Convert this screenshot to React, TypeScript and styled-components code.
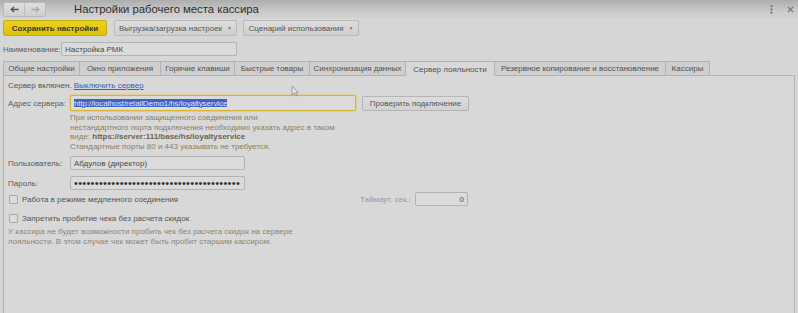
import styled, { createGlobalStyle } from "styled-components";

const GlobalStyle = createGlobalStyle`
  html, body {
    margin: 0;
    padding: 0;
    background: #d6d6d6;
  }
  body {
    font-family: "Liberation Sans", Arial, sans-serif;
    font-size: 8px;
    color: #444;
  }
`;

const Window = styled.div`
  width: 798px;
  height: 313px;
  overflow: hidden;
  display: flex;
  flex-direction: column;
  background: #d6d6d6;
`;

const TitleBar = styled.div`
  height: 18px;
  flex: none;
  display: flex;
  align-items: center;
  padding: 0 3px;
  background: linear-gradient(#adadad, #c9c9c9 60%, #d3d3d3);
`;

const NavGroup = styled.div`
  display: flex;
  height: 13px;
  border: 1px solid #b8b8b8;
  border-radius: 2px;
  background: linear-gradient(#dedede, #cfcfcf);
`;

const NavButton = styled.div<{ $disabled?: boolean }>`
  width: 20px;
  display: flex;
  align-items: center;
  justify-content: center;
  color: ${({ $disabled }) => ($disabled ? "#a8a8a8" : "#555")};
  & + & {
    border-left: 1px solid #bdbdbd;
  }
`;

const Title = styled.div`
  margin-left: 28px;
  font-size: 11.3px;
  color: #2e2e2e;
  flex: 1;
`;

const WinIcon = styled.div`
  width: 10px;
  display: flex;
  justify-content: center;
  color: #777;
  & + & {
    margin-left: 9px;
  }
`;

const Toolbar = styled.div`
  display: flex;
  gap: 6px;
  padding: 2px 3px 0;
  height: 16px;
`;

const ToolButton = styled.div<{ $primary?: boolean; $w: number }>`
  width: ${({ $w }) => $w}px;
  box-sizing: border-box;
  display: flex;
  align-items: center;
  justify-content: center;
  border: 1px solid ${({ $primary }) => ($primary ? "#c4ad10" : "#b9b9b9")};
  border-radius: 2px;
  background: ${({ $primary }) =>
    $primary ? "linear-gradient(#ead31a, #dcc308)" : "linear-gradient(#dcdcdc, #d0d0d0)"};
  color: ${({ $primary }) => ($primary ? "#3b3818" : "#555")};
  font-weight: ${({ $primary }) => ($primary ? 700 : 400)};
  font-size: 8px;
  gap: 5px;
`;

const Caret = styled.span`
  font-size: 5px;
  color: #777;
`;

const NameRow = styled.div`
  display: flex;
  align-items: center;
  padding: 6px 3px 0;
  height: 14px;
`;

const Label = styled.div<{ $w?: number; $dim?: boolean }>`
  width: ${({ $w }) => ($w ? `${$w}px` : "auto")};
  flex: none;
  color: ${({ $dim }) => ($dim ? "#9a9a9a" : "#5b5b5b")};
`;

const Input = styled.div<{ $w: number; $focus?: boolean; $right?: boolean; $h?: number }>`
  width: ${({ $w }) => $w}px;
  height: ${({ $h }) => $h ?? 14}px;
  box-sizing: border-box;
  display: flex;
  align-items: center;
  justify-content: ${({ $right }) => ($right ? "flex-end" : "flex-start")};
  padding: 0 3px;
  border: 1px solid ${({ $focus }) => ($focus ? "#d6b632" : "#b3b3b3")};
  box-shadow: ${({ $focus }) => ($focus ? "0 0 0 0.5px #e2c650" : "none")};
  border-radius: 2px;
  background: #dbdbdb;
  color: #4a4a4a;
  white-space: nowrap;
  overflow: hidden;
`;

const Selection = styled.span`
  background: #3f60c4;
  color: #dfe5ff;
  text-decoration: underline;
  letter-spacing: -0.1px;
`;

const Dots = styled.span`
  font-size: 11px;
  letter-spacing: 0.3px;
  color: #333;
  line-height: 1;
`;

const TabStrip = styled.div`
  display: flex;
  padding: 5px 3px 0;
  height: 15px;
  flex: none;
`;

const Tab = styled.div<{ $w: number; $active?: boolean }>`
  width: ${({ $w }) => $w}px;
  box-sizing: border-box;
  display: flex;
  align-items: center;
  justify-content: center;
  border: 1px solid #b3b3b3;
  border-bottom: ${({ $active }) => ($active ? "none" : "1px solid #b3b3b3")};
  margin-left: -1px;
  background: ${({ $active }) => ($active ? "#d8d8d8" : "#cfcfcf")};
  color: #505050;
  position: relative;
  z-index: ${({ $active }) => ($active ? 1 : 0)};
  &:first-child {
    margin-left: 0;
  }
`;

const Panel = styled.div`
  flex: 1;
  margin: 0 3px;
  border: 1px solid #b3b3b3;
  border-bottom: none;
  margin-top: -1px;
  background: #d8d8d8;
  padding: 5px 4px 0;
  position: relative;
`;

const StatusLine = styled.div`
  height: 10px;
  line-height: 10px;
  color: #555;
`;

const Link = styled.span`
  color: #3a5db4;
  text-decoration: underline;
`;

const Row = styled.div<{ $top?: number; $h?: number }>`
  display: flex;
  align-items: center;
  margin-top: ${({ $top }) => $top ?? 0}px;
  height: ${({ $h }) => $h ?? 14}px;
`;

const Button = styled.div`
  margin-left: 6px;
  width: 107px;
  height: 15px;
  box-sizing: border-box;
  display: flex;
  align-items: center;
  justify-content: center;
  border: 1px solid #b5b5b5;
  border-radius: 2px;
  background: linear-gradient(#dddddd, #d1d1d1);
  color: #555;
`;

const Hint = styled.div<{ $indent?: number; $top?: number; $muted?: boolean }>`
  margin-left: ${({ $indent }) => $indent ?? 0}px;
  margin-top: ${({ $top }) => $top ?? 2}px;
  line-height: ${({ $muted }) => ($muted ? 10 : 9.5)}px;
  color: ${({ $muted }) => ($muted ? "#8a8676" : "#8a8262")};
  b {
    color: #6a6450;
  }
`;

const CheckBox = styled.div`
  width: 9px;
  height: 9px;
  box-sizing: border-box;
  border: 1px solid #a9a9a9;
  border-radius: 1px;
  background: #dcdcdc;
  margin: 0 4px 0 1px;
  flex: none;
`;

const CheckLabel = styled.div<{ $w?: number }>`
  display: flex;
  align-items: center;
  width: ${({ $w }) => ($w ? `${$w}px` : "auto")};
  color: #555;
`;

const Pointer = styled.svg`
  position: absolute;
  left: 287px;
  top: 9px;
  opacity: 0.7;
`;

const tabs = [
  { t: "Общие настройки", w: 77 },
  { t: "Окно приложения", w: 82 },
  { t: "Горячие клавиши", w: 75 },
  { t: "Быстрые товары", w: 76 },
  { t: "Синхронизация данных", w: 97 },
  { t: "Сервер лояльности", w: 90, active: true },
  { t: "Резервное копирование и восстановление", w: 172 },
  { t: "Кассиры", w: 45 },
];

export default function App() {
  return (
    <>
      <GlobalStyle />
      <Window>
        <TitleBar>
          <NavGroup>
            <NavButton>
              <svg width="9" height="7" viewBox="0 0 9 7">
                <path d="M8.5 3.5H1.5M4 1L1.3 3.5L4 6" stroke="currentColor" strokeWidth="1.4" fill="none" />
              </svg>
            </NavButton>
            <NavButton $disabled>
              <svg width="9" height="7" viewBox="0 0 9 7">
                <path d="M0.5 3.5H7.5M5 1L7.7 3.5L5 6" stroke="currentColor" strokeWidth="1.4" fill="none" />
              </svg>
            </NavButton>
          </NavGroup>
          <Title>Настройки рабочего места кассира</Title>
          <WinIcon>
            <svg width="3" height="9" viewBox="0 0 3 9">
              <circle cx="1.5" cy="1.2" r="1" fill="#666" />
              <circle cx="1.5" cy="4.5" r="1" fill="#666" />
              <circle cx="1.5" cy="7.8" r="1" fill="#666" />
            </svg>
          </WinIcon>
          <WinIcon style={{ marginRight: 0 }}>
            <svg width="7" height="7" viewBox="0 0 7 7">
              <path d="M1 1L6 6M6 1L1 6" stroke="#777" strokeWidth="1.1" />
            </svg>
          </WinIcon>
        </TitleBar>

        <Toolbar>
          <ToolButton $primary $w={104}>Сохранить настройки</ToolButton>
          <ToolButton $w={123} style={{ marginLeft: 1 }}>
            Выгрузка/загрузка настроек <Caret>▼</Caret>
          </ToolButton>
          <ToolButton $w={116}>
            Сценарий использования <Caret>▼</Caret>
          </ToolButton>
        </Toolbar>

        <NameRow>
          <Label $w={58}>Наименование:</Label>
          <Input $w={176}>Настройка РМК</Input>
        </NameRow>

        <TabStrip>
          {tabs.map((tab) => (
            <Tab key={tab.t} $w={tab.w} $active={tab.active}>
              {tab.t}
            </Tab>
          ))}
        </TabStrip>

        <Panel>
          <StatusLine>
            Сервер включен. <Link>Выключить сервер</Link>
          </StatusLine>

          <Row $top={4} $h={16}>
            <Label $w={62}>Адрес сервера:</Label>
            <Input $w={286} $h={16} $focus>
              <Selection>http://localhost/retailDemo1/hs/loyaltyservice</Selection>
            </Input>
            <Button>Проверить подключение</Button>
          </Row>

          <Hint $indent={62}>
            При использовании защищенного соединения или
            <br />
            нестандартного порта подключения необходимо указать адрес в таком
            <br />
            виде: <b>https://server:111/base/hs/loyaltyservice</b>
            <br />
            Стандартные порты 80 и 443 указывать не требуется.
          </Hint>

          <Row $top={5} $h={14}>
            <Label $w={62}>Пользователь:</Label>
            <Input $w={175}>Абдулов (директор)</Input>
          </Row>

          <Row $top={6} $h={14}>
            <Label $w={62}>Пароль:</Label>
            <Input $w={175}>
              <Dots>{"•".repeat(40)}</Dots>
            </Input>
          </Row>

          <Row $top={2} $h={14}>
            <CheckLabel $w={352}>
              <CheckBox />
              Работа в режиме медленного соединения
            </CheckLabel>
            <Label $w={55} $dim>
              Таймаут, сек.:
            </Label>
            <Input $w={53} $h={14} $right>
              0
            </Input>
          </Row>

          <Row $top={5} $h={14}>
            <CheckLabel>
              <CheckBox />
              Запретить пробитие чека без расчета скидок
            </CheckLabel>
          </Row>

          <Hint $top={2} $muted>
            У кассира не будет возможности пробить чек без расчета скидок на сервере
            <br />
            лояльности. В этом случае чек может быть пробит старшим кассиром.
          </Hint>

          <Pointer width="8" height="12" viewBox="0 0 8 12">
            <path d="M1 1V10L3 8L4.5 11L6 10.3L4.6 7.4H7.2Z" fill="#e8e8e8" stroke="#777" strokeWidth="0.8" />
          </Pointer>
        </Panel>
      </Window>
    </>
  );
}
